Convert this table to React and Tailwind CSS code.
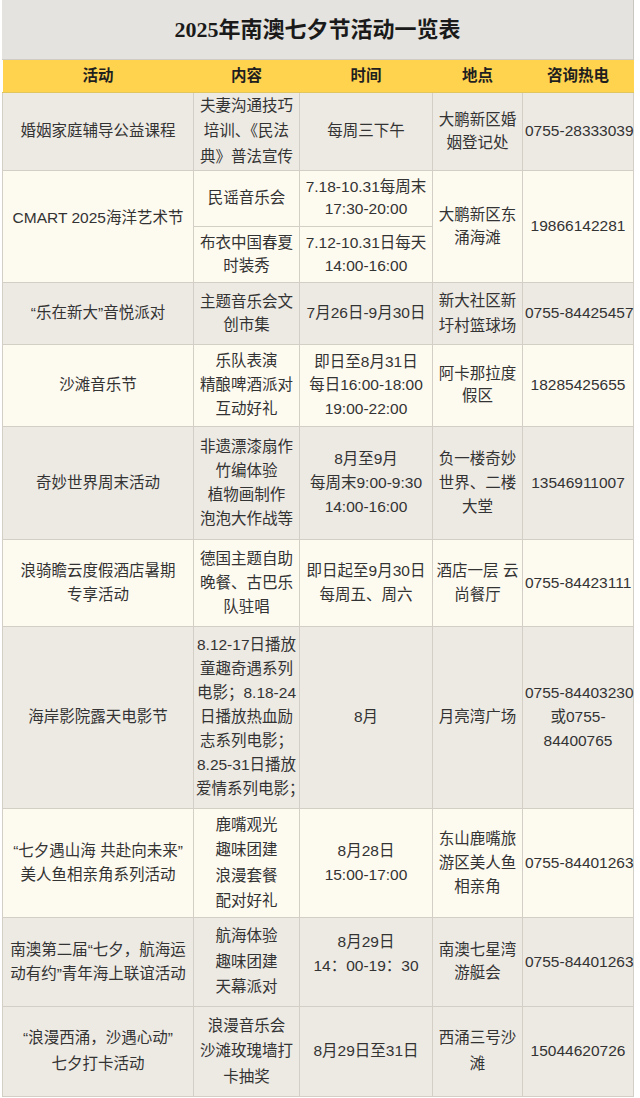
import React from 'react'

const font = { fontFamily: '"Liberation Sans", "Noto Sans CJK SC", sans-serif' }

// one cell per column; lines are the wrapped lines as seen in the picture
const rows = [
  {
    h: 'h-[78px]',
    bg: 'bg-[#EDEAE4]',
    cells: [
      { lines: ['婚姻家庭辅导公益课程'] },
      { lines: ['夫妻沟通技巧', '培训、《民法', '典》普法宣传'], lead: 'leading-[25.5px]' },
      { lines: ['每周三下午'] },
      { lines: ['大鹏新区婚', '姻登记处'], lead: 'leading-[23.5px]' },
      { lines: ['0755-28333039'] },
    ],
  },
  {
    h: 'h-[56px]',
    bg: 'bg-[#FDFAF0]',
    cells: [
      { lines: ['CMART 2025海洋艺术节'], rowSpan: 2, extra: 'pb-[16px]' },
      { lines: ['民谣音乐会'] },
      { lines: ['7.18-10.31每周末', '17:30-20:00'], lead: 'leading-[22.5px]' },
      { lines: ['大鹏新区东', '涌海滩'], rowSpan: 2, lead: 'leading-[23.5px]' },
      { lines: ['19866142281'], rowSpan: 2 },
    ],
  },
  {
    h: 'h-[56px]',
    bg: 'bg-[#FDFAF0]',
    cells: [
      { lines: ['布衣中国春夏', '时装秀'], lead: 'leading-[23.5px]' },
      { lines: ['7.12-10.31日每天', '14:00-16:00'], lead: 'leading-[23.5px]' },
    ],
  },
  {
    h: 'h-[62px]',
    bg: 'bg-[#EDEAE4]',
    cells: [
      { lines: ['“乐在新大”音悦派对'] },
      { lines: ['主题音乐会文', '创市集'], lead: 'leading-[23.5px]' },
      { lines: ['7月26日-9月30日'] },
      { lines: ['新大社区新', '圩村篮球场'], lead: 'leading-[25px]' },
      { lines: ['0755-84425457'] },
    ],
  },
  {
    h: 'h-[82px]',
    bg: 'bg-[#FDFAF0]',
    cells: [
      { lines: ['沙滩音乐节'] },
      { lines: ['乐队表演', '精酿啤酒派对', '互动好礼'] },
      { lines: ['即日至8月31日', '每日16:00-18:00', '19:00-22:00'], lead: 'leading-[23.5px]' },
      { lines: ['阿卡那拉度', '假区'], lead: 'leading-[22px]' },
      { lines: ['18285425655'] },
    ],
  },
  {
    h: 'h-[113px]',
    bg: 'bg-[#EDEAE4]',
    cells: [
      { lines: ['奇妙世界周末活动'] },
      { lines: ['非遗漂漆扇作', '竹编体验', '植物画制作', '泡泡大作战等'] },
      { lines: ['8月至9月', '每周末9:00-9:30', '14:00-16:00'] },
      { lines: ['负一楼奇妙', '世界、二楼', '大堂'] },
      { lines: ['13546911007'] },
    ],
  },
  {
    h: 'h-[87px]',
    bg: 'bg-[#FDFAF0]',
    cells: [
      { lines: ['浪骑瞻云度假酒店暑期', '专享活动'], lead: 'leading-[23.5px]' },
      { lines: ['德国主题自助', '晚餐、古巴乐', '队驻唱'] },
      { lines: ['即日起至9月30日', '每周五、周六'], lead: 'leading-[23.5px]' },
      { lines: ['酒店一层 云', '尚餐厅'], lead: 'leading-[23.5px]' },
      { lines: ['0755-84423111'] },
    ],
  },
  {
    h: 'h-[182px]',
    bg: 'bg-[#EDEAE4]',
    cells: [
      { lines: ['海岸影院露天电影节'] },
      {
        lines: ['8.12-17日播放', '童趣奇遇系列', '电影；8.18-24', '日播放热血励', '志系列电影；', '8.25-31日播放', '爱情系列电影；'],
      },
      { lines: ['8月'] },
      { lines: ['月亮湾广场'] },
      { lines: ['0755-84403230', '或0755-', '84400765'] },
    ],
  },
  {
    h: 'h-[109px]',
    bg: 'bg-[#FDFAF0]',
    cells: [
      { lines: ['“七夕遇山海 共赴向未来”', '美人鱼相亲角系列活动'], lead: 'leading-[23.5px]' },
      { lines: ['鹿嘴观光', '趣味团建', '浪漫套餐', '配对好礼'], lead: 'leading-[25.5px]' },
      { lines: ['8月28日', '15:00-17:00'], lead: 'leading-[23.5px]' },
      { lines: ['东山鹿嘴旅', '游区美人鱼', '相亲角'] },
      { lines: ['0755-84401263'] },
    ],
  },
  {
    h: 'h-[89px]',
    bg: 'bg-[#EDEAE4]',
    cells: [
      { lines: ['南澳第二届“七夕，航海运', '动有约”青年海上联谊活动'], lead: 'leading-[23.5px]' },
      { lines: ['航海体验', '趣味团建', '天幕派对'], lead: 'leading-[25.5px]' },
      { lines: ['8月29日', '14：00-19：30'], extra: 'pb-[16px]' },
      { lines: ['南澳七星湾', '游艇会'], lead: 'leading-[22.5px]' },
      { lines: ['0755-84401263'] },
    ],
  },
  {
    h: 'h-[90px]',
    bg: 'bg-[#EDEAE4]',
    cells: [
      { lines: ['“浪漫西涌，沙遇心动”', '七夕打卡活动'], lead: 'leading-[26px]' },
      { lines: ['浪漫音乐会', '沙滩玫瑰墙打', '卡抽奖'], lead: 'leading-[25.5px]' },
      { lines: ['8月29日至31日'] },
      { lines: ['西涌三号沙', '滩'], lead: 'leading-[26px]' },
      { lines: ['15044620726'] },
    ],
  },
]

const headers = ['活动', '内容', '时间', '地点', '咨询热电']

function Cell({ cell }) {
  return (
    <td
      rowSpan={cell.rowSpan}
      className={`border border-[#D3CFC7] px-[2px] text-center align-middle whitespace-nowrap overflow-visible ${cell.lead || 'leading-[24px]'} ${cell.extra || ''}`}
    >
      {cell.lines.map((l, i) => (
        <div key={i}>{l}</div>
      ))}
    </td>
  )
}

export default function App() {
  return (
    <div className="w-[640px] min-h-[1098px] bg-white" style={font}>
      <div className="ml-[2px] w-[632px] border-r border-[#C9C6C0]">
        {/* Title */}
        <div className="h-[60px] bg-[#E4E3DF] flex items-center justify-center border-b border-[#CFCCC6]">
          <h1
            className="text-[22px] font-semibold text-[#1A1A1A] tracking-[0px]"
            style={{ fontFamily: '"Liberation Serif", "Noto Sans CJK SC", serif' }}
          >
            2025年南澳七夕节活动一览表
          </h1>
        </div>

        {/* Table */}
        <table className="w-[631px] table-fixed border-collapse text-[15.5px] text-[#333]">
          <colgroup>
            <col className="w-[191px]" />
            <col className="w-[106px]" />
            <col className="w-[133px]" />
            <col className="w-[90px]" />
            <col className="w-[111px]" />
          </colgroup>
          <thead>
            <tr className="h-[32px] bg-[#FFD34E]">
              {headers.map(h => (
                <th key={h} className="font-bold text-[#1F1F1F] text-center align-middle border-b border-[#E0C65C]">
                  {h}
                </th>
              ))}
            </tr>
          </thead>
          <tbody>
            {rows.map((r, i) => (
              <tr key={i} className={`${r.h} ${r.bg}`}>
                {r.cells.map((c, j) => (
                  <Cell key={j} cell={c} />
                ))}
              </tr>
            ))}
          </tbody>
        </table>
      </div>
    </div>
  )
}
